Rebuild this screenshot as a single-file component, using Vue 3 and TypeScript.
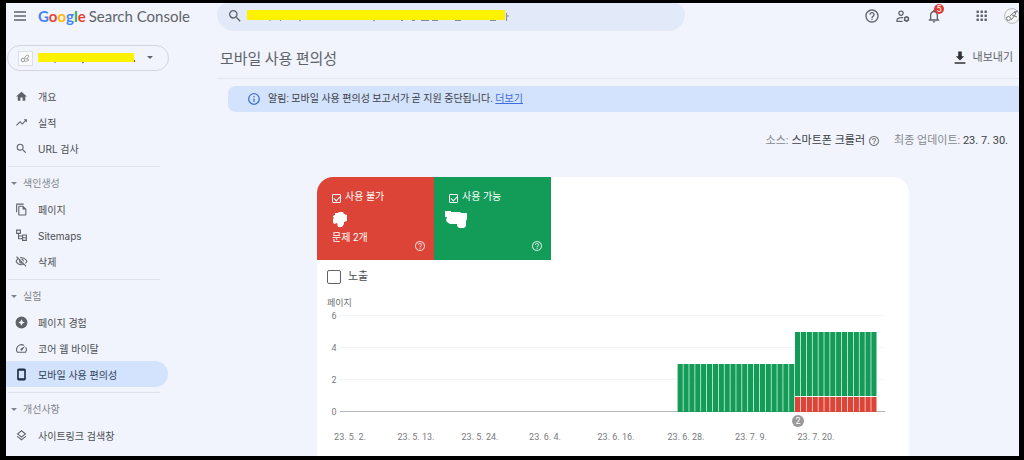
<script setup lang="ts">
import { ref } from 'vue'

interface NavItem { label: string; icon: string }
interface NavGroup { title?: string; items: NavItem[] }

const icons: Record<string, string> = {
  home: 'M10 20v-6h4v6h5v-8h3L12 3 2 12h3v8z',
  trend: 'M16 6l2.29 2.29-4.88 4.88-4-4L2 16.59 3.41 18l6-6 4 4 6.3-6.29L22 12V6z',
  search: 'M15.5 14h-.79l-.28-.27A6.471 6.471 0 0 0 16 9.5 6.5 6.5 0 1 0 9.5 16c1.61 0 3.09-.59 4.23-1.57l.27.28v.79l5 4.99L20.49 19l-4.99-5zm-6 0C7.01 14 5 11.99 5 9.5S7.01 5 9.5 5 14 7.01 14 9.5 11.99 14 9.5 14z',
  pages: 'M16 1H4C2.9 1 2 1.9 2 3v14h2V3h12V1zm-1 4H8c-1.1 0-1.99.9-1.99 2L6 21c0 1.1.89 2 1.99 2H19c1.1 0 2-.9 2-2V11l-6-6zM8 21V7h6v5h5v9H8z',
  sitemap: 'M2 1h9v8H7.5v3H13v-2h9v12h-9v-3H5.500V9H2zM4 3v4h5V3zM7.500 14v3H13v-3zM15 12v3h5v-3zM15 17v3h5v-3z',
  hidden: 'M12 6c3.79 0 7.17 2.13 8.82 5.5-.59 1.22-1.42 2.27-2.41 3.12l1.41 1.41c1.39-1.23 2.49-2.77 3.18-4.53C21.27 7.11 17 4 12 4c-1.27 0-2.49.2-3.64.57l1.65 1.65C10.66 6.090 11.320 6 12 6zm-1.070 1.140L13 9.210c.57.25 1.030.71 1.280 1.280l2.070 2.070c.08-.34.14-.7.14-1.070C16.500 9.010 14.480 7 12 7c-.37 0-.72.05-1.070.14zM2.010 3.870l2.680 2.680C3.060 7.830 1.770 9.530 1 11.500 2.730 15.890 7 19 12 19c1.520 0 2.980-.29 4.320-.82l3.420 3.420 1.410-1.410L3.420 2.450 2.010 3.870zm7.500 7.500l2.610 2.610c-.04.01-.08.02-.12.02-1.380 0-2.500-1.120-2.500-2.500 0-.05.01-.08.01-.13zm-3.400-3.400l1.750 1.750c-.23.55-.36 1.150-.36 1.780 0 2.480 2.020 4.500 4.500 4.500.63 0 1.230-.13 1.770-.36l.98.98c-.88.24-1.800.38-2.750.38-3.790 0-7.170-2.130-8.820-5.500.7-1.430 1.720-2.610 2.930-3.530z',
  experience: 'M12 1a11 11 0 1 0 0 22a11 11 0 1 0 0-22zM12 6l2 4 4 2-4 2-2 4-2-4-4-2 4-2z',
  speed: 'M20.380 8.570l-1.230 1.850a8 8 0 0 1-.22 7.580H5.070A8 8 0 0 1 15.580 6.850l1.850-1.230A10 10 0 0 0 3.350 19a2 2 0 0 0 1.720 1h13.850a2 2 0 0 0 1.740-1 10 10 0 0 0-.27-10.440zM10.590 15.410a2 2 0 0 0 2.830 0l5.660-8.490-8.490 5.660a2 2 0 0 0 0 2.830z',
  phone: 'M7 1h10c1.660 0 3 1.340 3 3v16c0 1.660-1.340 3-3 3H7c-1.660 0-3-1.340-3-3V4c0-1.660 1.340-3 3-3zM7 5v14h10V5z',
  layers: 'M11.990 18.540l-7.370-5.730L3 14.070l9 7 9-7-1.630-1.270zM12 16l7.360-5.730L21 9l-9-7-9 7 1.630 1.270L12 16zm0-11.470L17.740 9 12 13.470 6.260 9 12 4.530z',
  help: 'M11 18h2v-2h-2v2zm1-16C6.480 2 2 6.480 2 12s4.480 10 10 10 10-4.480 10-10S17.520 2 12 2zm0 18c-4.410 0-8-3.590-8-8s3.590-8 8-8 8 3.590 8 8-3.590 8-8 8zm0-14c-2.210 0-4 1.790-4 4h2c0-1.100.9-2 2-2s2 .9 2 2c0 2-3 1.750-3 5h2c0-2.250 3-2.500 3-5 0-2.210-1.790-4-4-4z',
  info: 'M11 7h2v2h-2zm0 4h2v6h-2zm1-9C6.480 2 2 6.480 2 12s4.480 10 10 10 10-4.480 10-10S17.520 2 12 2zm0 18c-4.410 0-8-3.590-8-8s3.590-8 8-8 8 3.590 8 8-3.590 8-8 8z',
  bell: 'M12 22c1.100 0 2-.9 2-2h-4c0 1.100.9 2 2 2zm6-6v-5c0-3.070-1.630-5.640-4.500-6.320V4c0-.83-.67-1.500-1.500-1.500s-1.500.67-1.500 1.500v.68C7.640 5.360 6 7.920 6 11v5l-2 2v1h16v-1l-2-2zm-2 1H8v-6c0-2.480 1.510-4.500 4-4.500s4 2.020 4 4.500v6z',
  download: 'M15 2v8h4l-7 7-7-7h4V2zM3 20h18v2.500H3z',
}

const groups: NavGroup[] = [
  { items: [
    { label: '개요', icon: 'home' },
    { label: '실적', icon: 'trend' },
    { label: 'URL 검사', icon: 'search' },
  ] },
  { title: '색인생성', items: [
    { label: '페이지', icon: 'pages' },
    { label: 'Sitemaps', icon: 'sitemap' },
    { label: '삭제', icon: 'hidden' },
  ] },
  { title: '실험', items: [
    { label: '페이지 경험', icon: 'experience' },
    { label: '코어 웹 바이탈', icon: 'speed' },
    { label: '모바일 사용 편의성', icon: 'phone' },
  ] },
  { title: '개선사항', items: [{ label: '사이트링크 검색창', icon: 'layers' }] },
]
const active = ref('모바일 사용 편의성')

const query = ref('')
const showBad = ref(true)
const showGood = ref(true)
const showImpressions = ref(false)

// Horizontal chart positions are percentages of the chart's width.
const CHART_W = 558
const pct = (x: number): string => `${(x / CHART_W) * 100}%`
const UNIT = 16
const BASE = 104
const ticks = [6, 4, 2, 0]
const bars = Array.from({ length: 34 }, (_, i) => ({
  x: 350.6 + i * 5.87,
  bad: i < 20 ? 0 : 1,
  good: i < 20 ? 3 : 4,
}))
const dates = [
  { x: 23, text: '23. 5. 2.' },
  { x: 89, text: '23. 5. 13.' },
  { x: 153, text: '23. 5. 24.' },
  { x: 218, text: '23. 6. 4.' },
  { x: 289, text: '23. 6. 16.' },
  { x: 359, text: '23. 6. 28.' },
  { x: 424, text: '23. 7. 9.' },
  { x: 489, text: '23. 7. 20.' },
]
</script>

<template>
  <div class="window">
    <header class="topbar">
      <div class="brand">
        <button class="icon-btn" aria-label="메뉴">
          <svg width="12" height="10" viewBox="0 0 12 10"><path d="M0 1h12M0 5h12M0 9h12" stroke="#5f6368" stroke-width="1.300" /></svg>
        </button>
        <a class="logo" href="#"><span class="google"><i class="b">G</i><i class="r">o</i><i class="y">o</i><i class="b">g</i><i class="g">l</i><i class="r">e</i></span><span>Search Console</span></a>
      </div>
      <div class="search">
        <svg class="ico" width="16" height="16" viewBox="0 0 24 24"><path :d="icons.search" /></svg>
        <div class="field">
          <input v-model="query" type="text" aria-label="URL 검사">
          <svg class="redact" width="262" height="13" viewBox="0 0 262 13">
            <path d="M23 10v1M34 10l-1 1M54 10l-2 1M128 10l-2 1M154 10.500h2M165 10.500h3M174 10.500h8M185 10.500h6M208 10.500h6M243 10.500h6M259.500 3v8M260 6h2" stroke="#8689a8" fill="none" />
            <path d="M0 0h258v10H0z" fill="#fff200" />
          </svg>
        </div>
      </div>
      <div class="tools">
        <button class="icon-btn" aria-label="도움말"><svg class="ico" width="16" height="16" viewBox="0 0 24 24"><path :d="icons.help" /></svg></button>
        <button class="icon-btn users" aria-label="사용자 설정">
          <svg width="14" height="13" viewBox="0 0 14 13" fill="none" stroke="#5f6368" stroke-width="1.300">
            <circle cx="5" cy="3.300" r="2.100" /><path d="M7 7.700C4 7.200 1 8.300 1 10v1.300h5.500" />
            <circle cx="10.500" cy="9" r="1.900" stroke-width="1.500" /><path d="M10.500 6v1M10.500 11v1M7.900 7.500l.9.500M12.200 10l.9.500M7.900 10.500l.9-.5M12.200 8l.9-.5" />
          </svg>
        </button>
        <button class="icon-btn bell" aria-label="알림"><svg class="ico" width="16" height="16" viewBox="0 0 24 24"><path :d="icons.bell" /></svg><span class="badge">5</span></button>
        <button class="icon-btn apps" aria-label="앱">
          <svg width="12" height="12" viewBox="0 0 12 12" fill="#5f6368"><template v-for="r in 3" :key="r"><rect v-for="c in 3" :key="c" :x="(c - 1) * 4 + 0.5" :y="(r - 1) * 4 + 0.5" width="2.400" height="2.400" rx=".5" /></template></svg>
        </button>
        <button class="icon-btn avatar" aria-label="계정">
          <svg width="16" height="16" viewBox="0 0 16 16" fill="none" stroke="#777b80"><circle cx="8" cy="8" r="7.400" fill="#f6f6f6" stroke="#a5a8ad" stroke-width=".8" /><circle cx="4.500" cy="10.500" r="2" /><path d="M6 8l3-3 3-1-1 3-4 5M8 7l5 2M10 4l4-1" /></svg>
        </button>
      </div>
    </header>

    <div class="body">
      <aside class="sidebar">
        <button class="property" aria-label="속성 선택">
          <span class="thumb"><svg width="11" height="11" viewBox="0 0 11 11" fill="none" stroke="#92969b"><circle cx="3" cy="7" r="1.800" /><path d="M4 5l3-3 2 1-2 3 2 1-4 2M7 6L5 5" stroke-width=".8" /></svg></span>
          <svg class="hidden-name" width="98" height="11" viewBox="0 0 98 11"><path d="M17 9v1M46 9l-2 1M96.500 7v2" stroke="#555" /><path d="M0 0h96v9H0z" fill="#fff200" /></svg>
          <svg width="6" height="4" viewBox="0 0 6 4"><path d="M0 0h6L3 3z" fill="#5f6368" /></svg>
        </button>
        <nav>
          <section v-for="(group, gi) in groups" :key="gi" class="group">
            <button v-if="group.title" class="group-title">
              <svg width="6" height="3" viewBox="0 0 6 3"><path d="M0 0h6L3 3z" /></svg>{{ group.title }}
            </button>
            <a v-for="item in group.items" :key="item.label" href="#" class="item" :class="{ on: item.label === active }" @click.prevent="active = item.label">
              <svg width="13" height="13" viewBox="0 0 24 24"><path :d="icons[item.icon]" fill-rule="evenodd" /></svg>
              <span>{{ item.label }}</span>
            </a>
          </section>
        </nav>
      </aside>

      <main>
        <div class="title-row">
          <h1>모바일 사용 편의성</h1>
          <button class="export"><svg width="12" height="13" viewBox="2 1 20 22" preserveAspectRatio="none"><path :d="icons.download" /></svg>내보내기</button>
        </div>
        <div class="notice">
          <svg width="14" height="14" viewBox="0 0 24 24"><path :d="icons.info" /></svg>
          <span>알림: 모바일 사용 편의성 보고서가 곧 지원 중단됩니다. <a href="#">더보기</a></span>
        </div>
        <div class="meta">
          <span class="source">소스: <b>스마트폰 크롤러</b><svg width="12" height="12" viewBox="0 0 24 24"><path :d="icons.help" /></svg></span>
          <span>최종 업데이트: <b>23. 7. 30.</b></span>
        </div>

        <div class="card">
          <div class="tiles">
            <div class="tile bad">
              <label><input v-model="showBad" type="checkbox">사용 불가</label>
              <svg class="blob" width="24" height="18" viewBox="0 0 24 18"><path d="M3 2h3l1-1h4l1 2 3 1v6l-3 1v2l-2 3H6l-1-4-3 1-1-2V8l1-1-1-1V5l2-1z" /></svg>
              <span>문제 2개</span>
              <svg class="tip" width="12" height="12" viewBox="0 0 24 24"><path :d="icons.help" /></svg>
            </div>
            <div class="tile good">
              <label><input v-model="showGood" type="checkbox">사용 가능</label>
              <svg class="blob" width="24" height="18" viewBox="0 0 24 18"><path d="M1 0h6v1h9l1 1h6v6l-1 2v5l-2 2h-5l-2-2v-2H6l-3-2-1-2 1-3H1z" /></svg>
              <svg class="tip" width="12" height="12" viewBox="0 0 24 24"><path :d="icons.help" /></svg>
            </div>
          </div>
          <label class="impressions"><input v-model="showImpressions" type="checkbox">노출</label>
          <div class="chart">
            <div class="axis-name">페이지</div>
            <svg class="plot" width="100%" height="138" role="img" aria-label="페이지">
              <g v-for="t in ticks" :key="t">
                <text :x="pct(7)" :y="BASE - t * UNIT + 3" text-anchor="middle">{{ t }}</text>
                <rect :x="pct(13)" :y="BASE - t * UNIT - 1" :width="pct(545)" height="1" :fill="t ? '#f1f3f4' : '#b4b7ba'" />
              </g>
              <g v-for="(b, i) in bars" :key="i">
                <rect :x="pct(b.x)" :y="BASE - (b.good + b.bad) * UNIT" :width="pct(5.2)" :height="b.good * UNIT" fill="#129c58" />
                <rect v-if="b.bad" :x="pct(b.x)" :y="BASE - UNIT + 1" :width="pct(5.2)" :height="UNIT - 1" fill="#db4437" />
              </g>
              <circle :cx="pct(471)" cy="113" r="6" fill="#999" />
              <text class="mark" :x="pct(471)" y="116" text-anchor="middle">2</text>
              <text v-for="d in dates" :key="d.text" :x="pct(d.x)" y="132" text-anchor="middle">{{ d.text }}</text>
            </svg>
          </div>
        </div>
      </main>
    </div>
  </div>
</template>

<style>
body { margin: 0; background: #000; }
</style>

<style scoped>
* { box-sizing: border-box; }
.window {
  height: 100vh; overflow: hidden; display: flex; flex-direction: column;
  border: solid #000; border-width: 3px 5px 4px 6px; background: #f1f4fc; color: #4b4e53;
  font: 10px/14px Roboto, "Noto Sans CJK KR", sans-serif;
}
button { border: 0; padding: 0; background: none; font: inherit; color: inherit; cursor: pointer; }
svg { display: block; flex: none; }
a { color: inherit; text-decoration: none; }
.ico { fill: #5f6368; }
.icon-btn { display: flex; align-items: center; }

.topbar { display: flex; height: 28px; flex: none; }
.brand { width: 211px; flex: none; display: flex; align-items: center; gap: 12px; padding: 0 0 2px 8px; }
.logo { display: flex; align-items: baseline; gap: 3px; font: 15px/20px Lato, sans-serif; color: #5f6368; white-space: nowrap; }
.google { font-size: 15px; font-weight: 700; }
.google i { font-style: normal; }
.b { color: #4285f4; } .r { color: #ea4335; } .y { color: #fbbc05; } .g { color: #34a853; }
.search {
  width: 468px; flex: 0 1 auto; display: flex; align-items: center; gap: 4px; padding: 0 12px 2px 10px;
  background: #e2eafa; border-radius: 12px 12px 18px 18px;
}
.field { flex: 1; display: grid; align-items: center; }
.field > * { grid-area: 1 / 1; }
.field input { width: 100%; height: 20px; border: 0; padding: 0; background: none; outline: 0; font: inherit; }
.redact { pointer-events: none; }
.tools { margin-left: auto; display: flex; align-items: center; gap: 16px; padding-bottom: 2px; margin-right: -1px; }
.bell { position: relative; }
.badge {
  position: absolute; left: 8px; top: -4px; width: 10px; height: 10px; border-radius: 50%;
  background: #dc3c30; color: #fff; font-size: 9px; line-height: 10px; text-align: center;
}
.apps { margin-left: 18px; }

.body { flex: 1; min-height: 0; display: flex; }
.sidebar { width: 211px; flex: none; overflow: hidden; }
.property {
  width: 162px; height: 26px; margin: 14px 0 12px 1px; padding: 0 15px 0 10px;
  border: 1px solid #d2d5dc; border-radius: 13px; display: flex; align-items: center;
}
.thumb { width: 15px; height: 15px; display: grid; place-items: center; border: 1px solid #dcdfe4; background: #fafafa; }
.hidden-name { margin: 1px auto 0 5px; }
.group + .group { margin-top: 5px; }
.group + .group::before { content: ""; display: block; width: 152px; height: 1px; margin: 0 0 4px 2px; background: #dfe2e8; }
.group-title { display: flex; align-items: center; gap: 6px; height: 25px; padding-left: 5px; color: #80848a; }
.group-title svg { fill: #80848a; }
.item { display: flex; align-items: center; gap: 10px; width: 162px; height: 26px; padding-left: 9px; border-radius: 0 13px 13px 0; }
.item svg { fill: #5f6368; }
.item span { padding-top: 1px; font-family: Inter, "Noto Sans CJK KR", sans-serif; }
.item.on { background: #d3e2fd; color: #2f3f57; }
.item.on svg { fill: #1f2d43; }
nav { padding-top: 0; }

main { flex: 1; min-width: 0; display: flex; flex-direction: column; }
.title-row { flex: none; height: 48px; display: flex; align-items: center; justify-content: space-between; padding: 6px 6px 0 3px; border-bottom: 1px solid #e3e6ee; }
h1 { margin: 0; font: 400 15px/20px "Noto Sans CJK KR", sans-serif; color: #5f6368; }
.export { display: flex; align-items: center; gap: 7px; font-size: 11px; color: #5f6368; }
.export svg { fill: #303236; }
.notice {
  flex: none; height: 26px; margin: 7px 0 0 11px; padding-left: 19px; display: flex; align-items: center; gap: 7px;
  background: #d3e2fd; border-radius: 8px 0 0 8px; color: #3c4043;
}
.notice svg { fill: #2f66d0; }
.notice a { color: #3f6fd8; text-decoration: underline; }
.meta { display: flex; justify-content: flex-end; gap: 14px; margin-top: 21px; padding-right: 11px; font-size: 11px; line-height: 16px; color: #85888d; }
.meta b { font-weight: 400; color: #3c4043; }
.source { display: flex; align-items: center; gap: 3px; white-space: nowrap; }
.meta svg { fill: #74777c; }

.card { flex: 1 0 auto; margin: 28px 110px 0 100px; background: #fff; border-radius: 16px 16px 0 0; overflow: hidden; }
.tiles { display: flex; }
.tile {
  position: relative; width: 117px; height: 83px; padding: 13px 15px; color: #fff;
  display: flex; flex-direction: column; align-items: flex-start; gap: 7px;
}
.bad { background: #db4437; }
.good { background: #129c58; }
.tile label { display: flex; align-items: center; gap: 4px; white-space: nowrap; }
.tile input {
  appearance: none; width: 9px; height: 9px; margin: 2px 0 0; border: 1px solid #fff; border-radius: 1px; display: grid; place-items: center;
}
.tile input:checked::before { content: ""; width: 5px; height: 3px; border: solid #fff; border-width: 0 0 1px 1px; rotate: -45deg; }
.blob { fill: #fff; }
.good .blob { margin-left: -5px; }
.tile > span { margin-top: -5px; }
.tip { position: absolute; right: 8px; bottom: 8px; fill: #ffffffc0; }
.impressions { display: flex; align-items: center; gap: 7px; width: max-content; margin: 10px 0 0 10px; font-size: 11px; line-height: 14px; }
.impressions input { appearance: none; width: 14px; height: 14px; margin: 0; border: 1px solid #5f6368; border-radius: 2px; }
.impressions input:checked { background: #5f6368; }
.chart { margin: 14px 24px 0 10px; }
.axis-name { font-size: 9px; line-height: 10px; color: #6b6e72; }
.plot { overflow: visible; }
.plot text { font-size: 9px; fill: #777a7e; }
.plot .mark { fill: #fff; }
</style>
